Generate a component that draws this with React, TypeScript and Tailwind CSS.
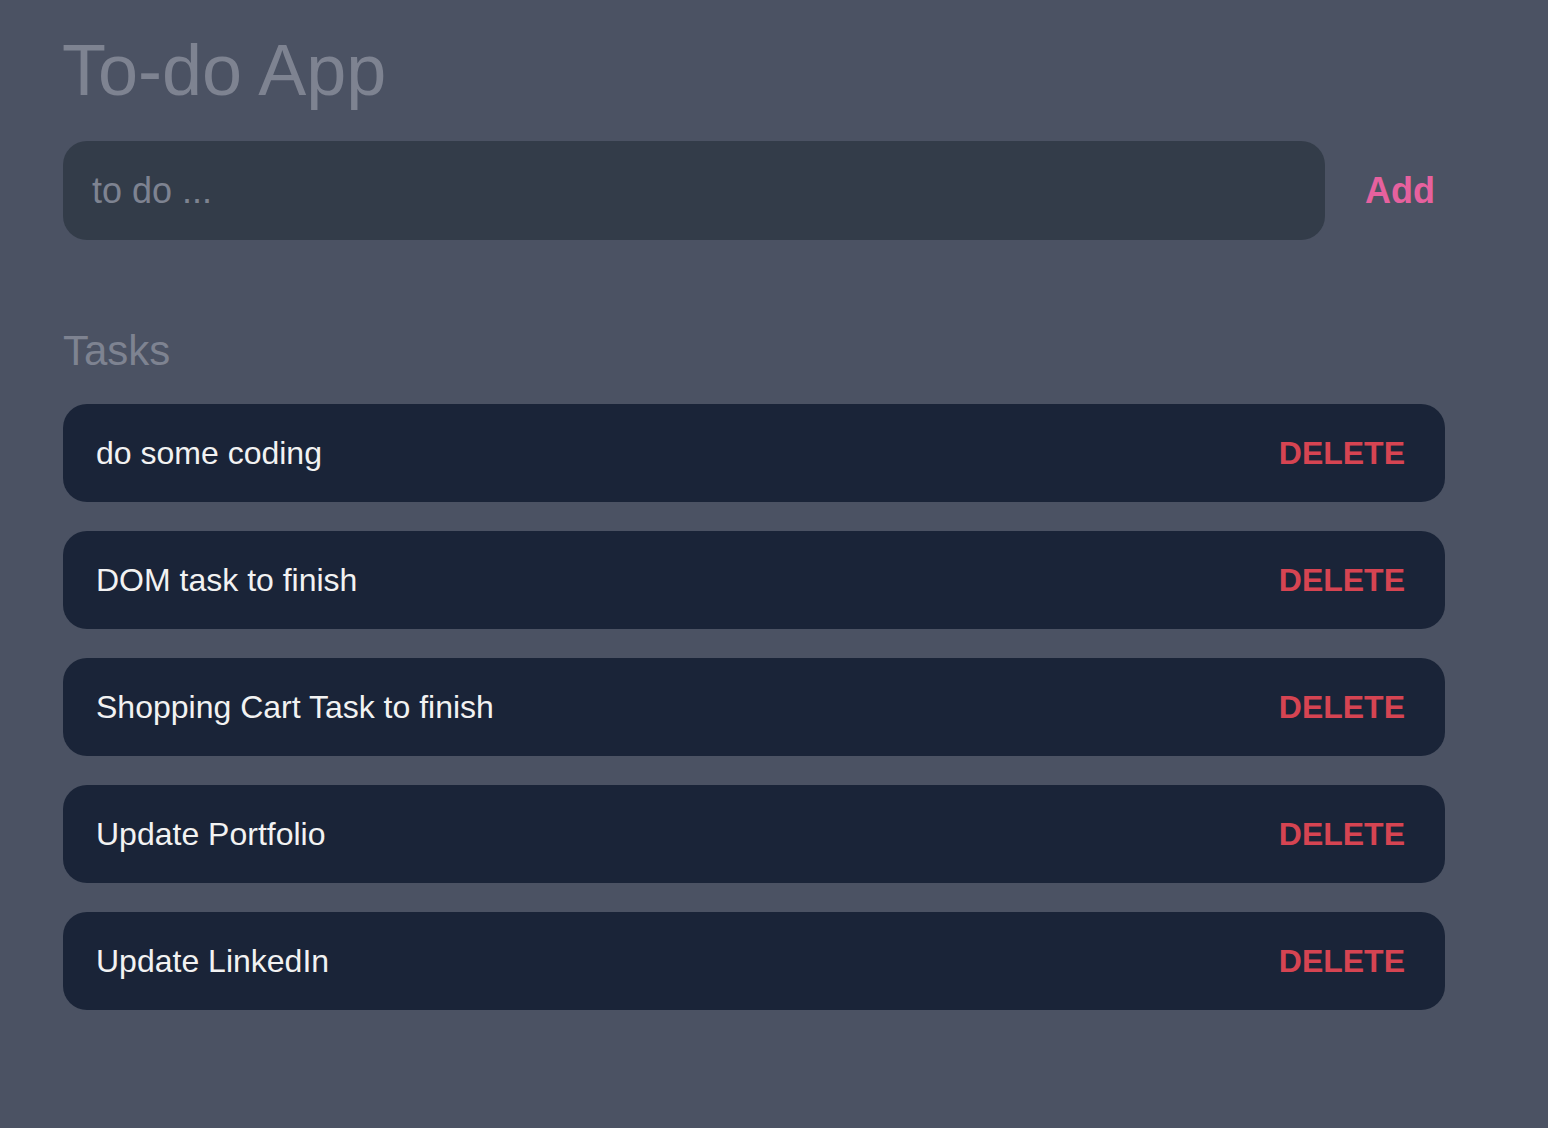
import React from "react";

const tasks = [
  "do some coding",
  "DOM task to finish",
  "Shopping Cart Task to finish",
  "Update Portfolio",
  "Update LinkedIn",
];

export default function App() {
  return (
    <div
      className="min-h-[1128px] w-full bg-[#4b5263] pl-[63px] pt-[34px]"
      style={{ fontFamily: '"Liberation Sans", Arial, sans-serif' }}
    >
      <h1 className="text-[72px] leading-none text-[#7e8391] -ml-[1px]">To-do App</h1>
      <div className="mt-[35px] flex items-center">
        <div className="flex h-[99px] w-[1262px] items-center rounded-[24px] bg-[#333c49] pl-[29px]">
          <span className="text-[36px] leading-none text-[#7e8391]">to do ...</span>
        </div>
        <button className="ml-[40px] text-[36px] font-bold leading-none text-[#e6619e]">Add</button>
      </div>
      <h2 className="mt-[90px] text-[42px] leading-none text-[#7e8391]">Tasks</h2>
      <div className="mt-[32px] flex w-[1382px] flex-col gap-[29px]">
        {tasks.map((t) => (
          <div
            key={t}
            className="flex h-[98px] items-center justify-between rounded-[24px] bg-[#1a2438] pl-[33px] pr-[40px]"
          >
            <span className="text-[32px] leading-none text-[#f2f2f2]">{t}</span>
            <span className="text-[32px] font-bold leading-none text-[#d64452]">DELETE</span>
          </div>
        ))}
      </div>
    </div>
  );
}
